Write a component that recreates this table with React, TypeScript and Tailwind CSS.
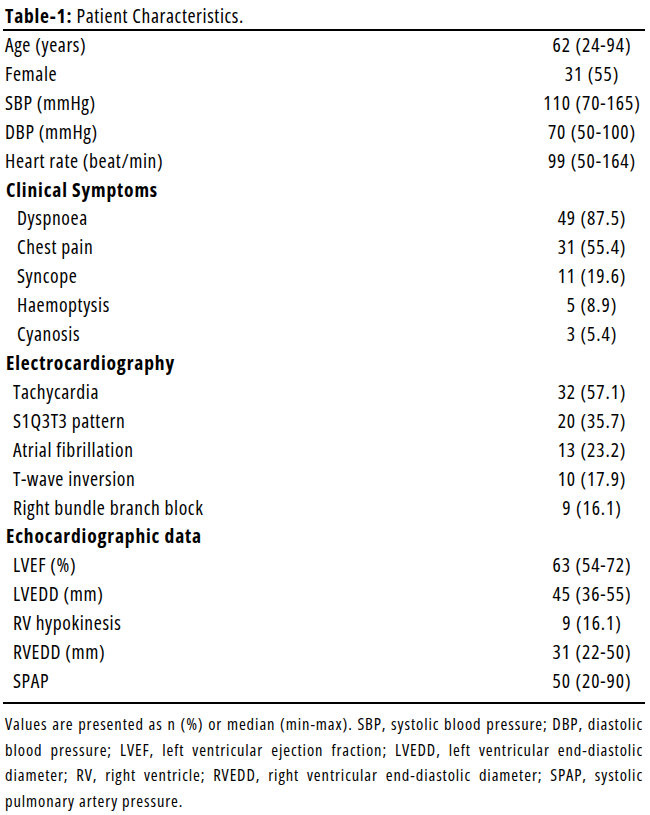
type Row = {
  label: string;
  value?: string;
  kind: "top" | "head" | "sub1" | "sub2";
};

const rows: Row[] = [
  { label: "Age (years)", value: "62 (24-94)", kind: "top" },
  { label: "Female", value: "31 (55)", kind: "top" },
  { label: "SBP (mmHg)", value: "110 (70-165)", kind: "top" },
  { label: "DBP (mmHg)", value: "70 (50-100)", kind: "top" },
  { label: "Heart rate (beat/min)", value: "99 (50-164)", kind: "top" },
  { label: "Clinical Symptoms", kind: "head" },
  { label: "Dyspnoea", value: "49 (87.5)", kind: "sub1" },
  { label: "Chest pain", value: "31 (55.4)", kind: "sub1" },
  { label: "Syncope", value: "11 (19.6)", kind: "sub1" },
  { label: "Haemoptysis", value: "5 (8.9)", kind: "sub1" },
  { label: "Cyanosis", value: "3 (5.4)", kind: "sub1" },
  { label: "Electrocardiography", kind: "head" },
  { label: "Tachycardia", value: "32 (57.1)", kind: "sub2" },
  { label: "S1Q3T3 pattern", value: "20 (35.7)", kind: "sub2" },
  { label: "Atrial fibrillation", value: "13 (23.2)", kind: "sub2" },
  { label: "T-wave inversion", value: "10 (17.9)", kind: "sub2" },
  { label: "Right bundle branch block", value: "9 (16.1)", kind: "sub2" },
  { label: "Echocardiographic data", kind: "head" },
  { label: "LVEF (%)", value: "63 (54-72)", kind: "sub2" },
  { label: "LVEDD (mm)", value: "45 (36-55)", kind: "sub2" },
  { label: "RV hypokinesis", value: "9 (16.1)", kind: "sub2" },
  { label: "RVEDD (mm)", value: "31 (22-50)", kind: "sub2" },
  { label: "SPAP", value: "50 (20-90)", kind: "sub2" },
];

const footnote = [
  "Values are presented as n (%) or median (min-max). SBP, systolic blood pressure; DBP, diastolic",
  "blood pressure; LVEF, left ventricular ejection fraction; LVEDD, left ventricular end-diastolic",
  "diameter; RV, right ventricle; RVEDD, right ventricular end-diastolic diameter; SPAP, systolic",
  "pulmonary artery pressure.",
];

const indent: Record<Row["kind"], string> = {
  top: "pl-[5px]",
  head: "pl-[6px] font-bold tracking-[0.85px]",
  sub1: "pl-[17px]",
  sub2: "pl-[13px]",
};

export default function App() {
  return (
    <div className="w-[650px] h-[815px] bg-white text-black font-['Open_Sans',sans-serif] font-stretch-condensed">
      <div className="pt-[3px] pl-[5px] text-[19.5px] leading-[26px] tracking-[0.6px]">
        <span className="font-bold tracking-[0.8px]">Table-1:</span> Patient Characteristics.
      </div>
      <div className="ml-[3px] mr-[5px] h-[2px] bg-black" />

      <div className="text-[19.5px] leading-[28.9px] tracking-[0.6px]">
        {rows.map((r) => (
          <div key={r.label} className="flex pr-[6px]">
            <div className={`flex-1 ${indent[r.kind]}`}>{r.label}</div>
            {r.value && (
              <div className="w-[104px] text-center tracking-[0.9px]">{r.value}</div>
            )}
          </div>
        ))}
      </div>

      <div className="mt-[6px] ml-[3px] mr-[5px] h-[2px] bg-black" />

      <div className="mt-[7px] pl-[5px] pr-[7px] text-[16.5px] leading-[25.7px] tracking-[0.9px]">
        {footnote.map((line, i) => (
          <div
            key={i}
            className={
              i < footnote.length - 1
                ? "text-justify [text-align-last:justify] whitespace-nowrap"
                : ""
            }
          >
            {line}
          </div>
        ))}
      </div>
    </div>
  );
}
